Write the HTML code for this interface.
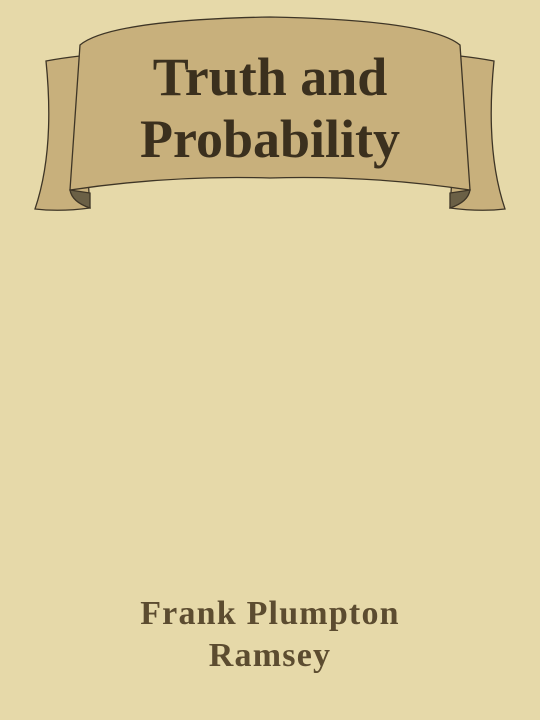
<!DOCTYPE html>
<html><head><style>
body{margin:0;width:540px;height:720px;background:#e6d9a9;overflow:hidden;position:relative;font-family:"Liberation Serif",serif}
svg{position:absolute;left:0;top:0}
.t{position:absolute;left:0;width:540px;text-align:center;font-weight:bold;color:#3b301e}
.a{position:absolute;left:0;width:540px;text-align:center;font-weight:bold;color:#5c4c30;font-size:32px;line-height:42px;letter-spacing:1.2px}
</style></head><body>
<svg width="540" height="720">
<g stroke="#3e3526" stroke-width="1.3" fill="#c8b07c">
<path d="M46,61 Q62,58 80,56 L90,208 Q60,212 35,209 Q55,150 46,61 Z"/>
<path d="M494,61 Q478,58 460,56 L450,208 Q480,212 505,209 Q485,150 494,61 Z"/>
<path d="M70,190 Q72,202 90,208 L90,193 Z" fill="#6b6046"/>
<path d="M470,190 Q468,202 450,208 L450,193 Z" fill="#6b6046"/>
<path d="M80,45 Q110,20 270,17 Q430,20 460,45 L470,190 Q370,175 270,178 Q170,175 70,190 Z"/>
</g>
</svg>
<div class="t" style="top:46px;font-size:54px;line-height:62px">Truth and<br>Probability</div>
<div class="a" style="top:593px;font-size:34px">Frank Plumpton<br>Ramsey</div>
</body></html>
